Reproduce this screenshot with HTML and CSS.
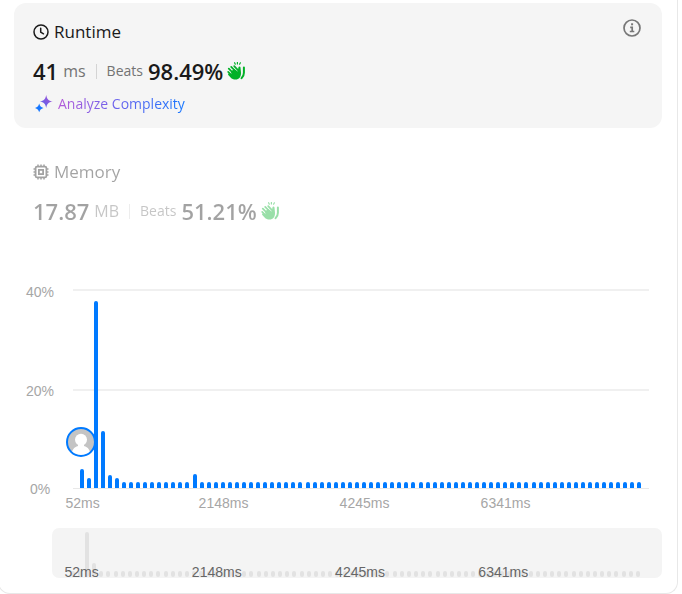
FILE: index.html
```html
<!DOCTYPE html>
<html lang="en">
<head>
<meta charset="utf-8">
<meta name="viewport" content="width=device-width, initial-scale=1">
<title>Submission performance</title>
<link rel="stylesheet" href="styles.css">
</head>
<body>
<svg class="symbols" aria-hidden="true">
  <defs>
    <symbol id="clap" viewBox="0 0 18 18">
      <g fill="none" stroke="currentColor" stroke-linecap="round">
        <path stroke-width="1.7" d="M1.2 9.9 4.5 13M1.8 6.7l4.4 4.4M4.2 4.9l4.5 4.6M7.2 4.1l4 4.3"/>
        <path stroke-width="1.2" d="M7.6.7l.7 1.5M10.4.4v1.6M13.4.8l-.8 1.4"/>
        <path stroke-width="2" d="M16.9 5.5v5.2c0 2.4-.8 4.2-2.4 5.5"/>
      </g>
      <path fill="currentColor" d="M4 9.6 7.2 7l3.600 2.400.6-4c.2-1.200 2-1.200 2.100 0l.5 5.400c.2 4.200-2 6.800-5.400 6.800-2.200 0-3.700-.8-5-2.200L1.300 13c-.8-1 .3-2.200 1.300-1.500l1.900 1.200z"/>
    </symbol>
  </defs>
</svg>
<main class="panel">
  <section class="metric metric-active">
    <button class="info" type="button" aria-label="About runtime">
      <svg viewBox="0 0 18 18" width="18" height="18" fill="none" stroke="currentColor" stroke-width="1.7">
        <circle cx="9" cy="9" r="8"/>
        <path d="M7.2 8.3h2v4.2M6.8 12.5h4.5"/>
        <path stroke-width="2" d="M8.1 5.3h2"/>
      </svg>
    </button>
    <h2 class="metric-title">
      <svg viewBox="0 0 16 16" width="16" height="16" fill="none" stroke="currentColor" stroke-width="1.5" stroke-linecap="round" stroke-linejoin="round" aria-hidden="true">
        <circle cx="8" cy="8" r="7"/><path d="M7.7 4.2v4l2.8 1.6"/>
      </svg>
      Runtime
    </h2>
    <div class="metric-row">
      <strong class="value">41</strong><span class="unit">ms</span>
      <span class="divider"></span>
      <span class="beats">Beats</span><strong class="value">98.49%</strong>
      <svg class="clap" aria-hidden="true"><use href="#clap"/></svg>
    </div>
    <button class="analyze" type="button">
      <svg viewBox="0 0 18 18" width="18" height="18" aria-hidden="true">
        <defs><linearGradient id="spark" x1="0" y1="1" x2="1" y2="0">
          <stop offset="0" stop-color="#4b64ef"/><stop offset="1" stop-color="#b052d4"/>
        </linearGradient></defs>
        <path fill="url(#spark)" d="M11.2 0c.9 4.5 2 5.600 6.500 6.500-4.500.9-5.600 2-6.500 6.500-.9-4.500-2-5.600-6.500-6.500C9.200 5.600 10.300 4.500 11.200 0z"/>
        <path fill="#1677ff" d="M4.200 8.500c.8 2.800 1.600 3.600 4.300 4.400-2.700.8-3.500 1.600-4.300 4.400C3.400 14.500 2.600 13.700 0 12.900c2.600-.8 3.400-1.600 4.200-4.400z"/>
      </svg>
      <span class="analyze-text">Analyze Complexity</span>
    </button>
  </section>

  <section class="metric metric-muted">
    <h2 class="metric-title">
      <svg viewBox="0 0 16 16" width="16" height="16" fill="none" stroke="currentColor" stroke-width="1.8" aria-hidden="true">
        <rect x="2.600" y="2.600" width="10.800" height="10.800" rx="1.500"/>
        <rect x="5.900" y="5.900" width="4.200" height="4.200"/>
        <path stroke-width="1.5" d="M5 .5v2M8 .5v2M11 .5v2M5 13.500v2M8 13.500v2M11 13.500v2M.5 5h2M.5 8h2M.5 11h2M13.500 5h2M13.500 8h2M13.500 11h2"/>
      </svg>
      Memory
    </h2>
    <div class="metric-row">
      <strong class="value">17.87</strong><span class="unit">MB</span>
      <span class="divider"></span>
      <span class="beats">Beats</span><strong class="value">51.21%</strong>
      <svg class="clap" aria-hidden="true"><use href="#clap"/></svg>
    </div>
  </section>

  <section class="chart" aria-label="Runtime distribution">
    <div class="y-axis"><span>40%</span><span>20%</span><span>0%</span></div>
    <div class="plot">
      <div class="avatar">
        <svg viewBox="0 0 30 30" width="30" height="30" aria-hidden="true">
          <defs><clipPath id="face"><circle cx="15" cy="15" r="13.500"/></clipPath></defs>
          <circle cx="15" cy="15" r="14" fill="#c4c4c4"/>
          <g clip-path="url(#face)" fill="#fff">
            <circle cx="15" cy="12.800" r="6"/>
            <path d="M12 17h6v2c4 1 6.500 4 6.500 10h-19c0-6 2.500-9 6.500-10z"/>
          </g>
          <circle cx="15" cy="15" r="14" fill="none" stroke="#007aff" stroke-width="2"/>
        </svg>
      </div>
      <div class="bars" id="bars"></div>
    </div>
    <div class="x-axis"><span>52ms</span><span>2148ms</span><span>4245ms</span><span>6341ms</span></div>
  </section>

  <section class="navigator" aria-label="Range overview">
    <div class="bars" id="overview"></div>
    <div class="x-axis"><span>52ms</span><span>2148ms</span><span>4245ms</span><span>6341ms</span></div>
  </section>
</main>
<script src="chart.js"></script>
</body>
</html>
```
FILE: chart.js
```js
// Share of submissions in each bucket, as a percentage of the plot height.
var shares = new Array(80).fill(3);
shares[0] = 9.5;
shares[1] = 5;
shares[2] = 94;
shares[3] = 28.5;
shares[4] = 6.5;
shares[5] = 5;
shares[16] = 7;

function draw(id, values) {
  var host = document.getElementById(id);
  values.forEach(function (value) {
    var bar = document.createElement("i");
    bar.style.height = value + "%";
    host.appendChild(bar);
  });
}

draw("bars", shares);
draw("overview", shares.map(function (share) {
  return Math.min(100, Math.max(share * 1.07, 14));
}));
```
FILE: styles.css
```css
* {
  box-sizing: border-box;
}

body {
  margin: 0;
  background: #fff;
  color: #1a1a1a;
  font-family: "Segoe UI", "Open Sans", "Noto Sans", sans-serif;
}

.symbols {
  position: absolute;
  width: 0;
  height: 0;
}

.panel {
  margin: 0 4px 0 -2px;
  padding: 3px 15px 15px 16px;
  border: 1px solid #e8e8e8;
  border-top: 0;
  border-radius: 0 0 12px 12px;
}

.metric {
  position: relative;
  padding: 17px 19px 16px;
  border-radius: 12px;
  margin-left: -1px;
}

.metric-active {
  padding-bottom: 14px;
  background: #f5f5f5;
}

.metric-muted {
  margin-top: 15px;
  opacity: 0.4;
}

.metric-title {
  display: flex;
  align-items: center;
  gap: 5px;
  margin: 0 0 13px;
  font-size: 17px;
  font-weight: 400;
  line-height: 24px;
}

.metric-row {
  display: flex;
  align-items: center;
  height: 28px;
  line-height: 28px;
}

.value {
  font-size: 22px;
  font-weight: 600;
}

.unit {
  margin-left: 5px;
  color: #737373;
  font-size: 16px;
}

.divider {
  width: 1px;
  height: 15px;
  margin: 0 10px;
  background: #d4d4d4;
}

.beats {
  margin-right: 5px;
  color: #737373;
  font-size: 14px;
}

.clap {
  width: 18px;
  height: 18px;
  margin-left: 4px;
  color: #02b128;
}

button {
  padding: 0;
  border: 0;
  background: none;
  font: inherit;
  cursor: pointer;
}

.info {
  position: absolute;
  top: 16px;
  right: 21px;
  height: 18px;
  color: #777;
}

.info svg {
  display: block;
}

.analyze {
  display: flex;
  align-items: center;
  gap: 5px;
  height: 20px;
  margin: 9px 0 0 2px;
  font-size: 14px;
  line-height: 20px;
}

.analyze-text {
  background: linear-gradient(90deg, #b45ad8, #6c62ec 45%, #1677ff);
  background-clip: text;
  -webkit-background-clip: text;
  color: transparent;
}

.chart {
  display: grid;
  grid-template-columns: 28px 1fr;
  column-gap: 19px;
  margin: 43px 13px 0 11px;
  color: #a6a6a6;
  font: 14px/16px "Liberation Sans", Arial, sans-serif;
}

.y-axis {
  display: flex;
  flex-direction: column;
  justify-content: space-between;
  align-items: center;
  height: 213px;
}

.plot {
  position: relative;
  height: 200px;
  margin-top: 5px;
  padding: 0 6px 0 5px;
  border-bottom: 1px solid #e8e8e8;
  background:
    linear-gradient(#f0f0f0, #f0f0f0) 0 0 / 100% 2px no-repeat,
    linear-gradient(#f0f0f0, #f0f0f0) 0 51% / 100% 2px no-repeat;
}

.bars {
  position: relative;
  display: flex;
  align-items: flex-end;
  height: 100%;
}

.bars i {
  flex: 1;
  margin: 0 calc((100% / 80 - 4px) / 2);
  border-radius: 2px 2px 0 0;
  background: #007aff;
}

.avatar {
  position: absolute;
  left: -7px;
  bottom: 31px;
  height: 30px;
}

.x-axis {
  display: grid;
  grid-template-columns: repeat(4, 1fr);
}

/* Each label is centred on the first of the 20 buckets it spans. */
.x-axis span {
  display: flex;
  justify-content: center;
  width: 7px;
}

.chart .x-axis {
  grid-column: 2;
  margin-top: -2px;
  padding: 0 6px;
}

.navigator {
  position: relative;
  height: 50px;
  margin: 17px 0 0 37px;
  padding: 4px 20px 1px 17px;
  border-radius: 7px;
  background: #f4f4f4;
  color: #666;
  font: 14px/16px "Liberation Sans", Arial, sans-serif;
}

.navigator .bars i {
  border-radius: 2px;
  background: #e2e2e2;
}

.navigator .x-axis {
  position: absolute;
  right: 19px;
  bottom: -2px;
  left: 18px;
}

.navigator .x-axis span:first-child {
  margin-left: 8px;
}
```
